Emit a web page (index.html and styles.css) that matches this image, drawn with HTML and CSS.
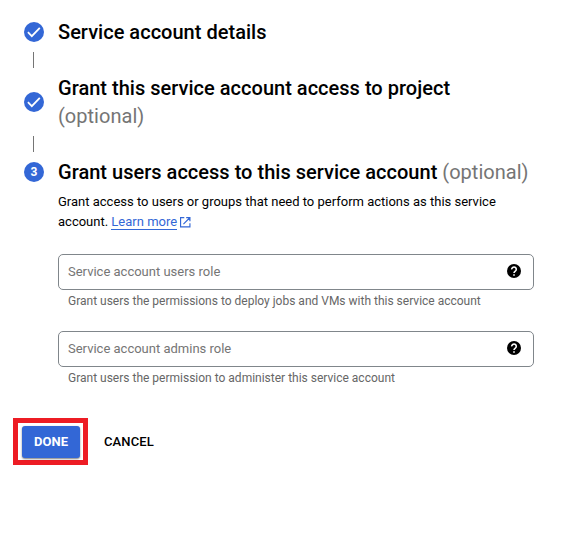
FILE: index.html
```html
<!DOCTYPE html>
<html lang="en">
<head>
<meta charset="utf-8">
<title>Create service account</title>
<link rel="stylesheet" href="styles.css">
</head>
<body>
<main class="stepper">
  <section class="step">
    <svg class="badge" viewBox="0 0 20 20"><circle cx="10" cy="10" r="10"/><path d="M3.9 10.2 7.8 14.1l8-8.3"/></svg>
    <h2>Service account details</h2>
  </section>
  <div class="connector"></div>
  <section class="step">
    <svg class="badge" viewBox="0 0 20 20"><circle cx="10" cy="10" r="10"/><path d="M3.9 10.2 7.8 14.1l8-8.3"/></svg>
    <h2>Grant this service account access to project <span class="optional">(optional)</span></h2>
  </section>
  <div class="connector"></div>
  <section class="step">
    <span class="badge number">3</span>
    <h2>Grant users access to this service account <span class="optional">(optional)</span></h2>
  </section>
  <div class="content">
    <p class="intro">Grant access to users or groups that need to perform actions as this service account. <a class="link">Learn more</a><svg class="external" viewBox="0 0 11 11"><path d="M4.5.6H.6v9.8h9.8V6.5M6.5.6h3.9v3.9M10.2.8 3.6 7.4"/></svg></p>
    <div class="field"><span>Service account users role</span><svg class="help" viewBox="0 0 14 14"><circle cx="7" cy="7" r="7"/><path d="M4.7 5.4a2.3 2.2 0 1 1 3.6 1.7C7.4 7.7 7 8 7 9.1M7 10.2v1.5"/></svg></div>
    <p class="hint">Grant users the permissions to deploy jobs and VMs with this service account</p>
    <div class="field"><span>Service account admins role</span><svg class="help" viewBox="0 0 14 14"><circle cx="7" cy="7" r="7"/><path d="M4.7 5.4a2.3 2.2 0 1 1 3.6 1.7C7.4 7.7 7 8 7 9.1M7 10.2v1.5"/></svg></div>
    <p class="hint">Grant users the permission to administer this service account</p>
  </div>
  <div class="actions">
    <div class="highlight"><button class="done">DONE</button></div>
    <button class="cancel">CANCEL</button>
  </div>
</main>
</body>
</html>
```
FILE: styles.css
```css
* { box-sizing: border-box; }
body { margin: 0; background: #fff; color: #000; font-family: Roboto, sans-serif; }
h2, p { margin: 0; }
button { border: 0; padding: 0; font: 500 13px/20px Roboto, sans-serif; letter-spacing: .1px; }
.stepper { padding: 18px 0 0 24px; }
.step { display: flex; align-items: center; gap: 14px; }
.badge { flex: none; width: 20px; height: 20px; fill: #3367d6; }
.badge path { fill: none; stroke: #fff; stroke-width: 1.8; }
.number { border-radius: 50%; background: #3367d6; color: #fff; font-size: 12px; font-weight: 700; line-height: 20px; text-align: center; }
.step h2 { width: 476px; font-size: 20px; line-height: 28px; font-weight: 500; letter-spacing: .02px; }
.step h2 .optional { color: #757575; font-weight: 400; }
.connector { width: 1px; height: 16px; margin: 6px 0 6px 9px; background: #757575; }
.content { width: 476px; margin-left: 34px; }
.intro { padding-top: 6px; font-size: 13px; line-height: 20px; }
.link { color: #3367d6; border-bottom: 1px solid #3367d6; }
.external { width: 10.5px; height: 10.5px; margin-left: 3px; vertical-align: -1.5px; fill: none; stroke: #3367d6; stroke-width: 1.2; }
.field { display: flex; align-items: center; justify-content: space-between; height: 36px; margin-top: 22px; padding: 0 12px 2px 9px; border: 1px solid #80868b; border-radius: 5px; color: #757575; font-size: 13px; }
.help { width: 14px; height: 14px; fill: #000; }
.help path { fill: none; stroke: #fff; stroke-width: 1.6; }
.hint { padding: 3px 10px 0; color: #666; font-size: 12px; line-height: 16px; }
.actions { display: flex; align-items: center; gap: 16px; margin: 32px 0 0 -11px; }
.highlight { width: 75px; height: 47px; padding: 3px 4px; border: 5px solid #ed1c24; }
.done { display: block; width: 58px; height: 32px; border-radius: 3px; background: #3367d6; color: #fff; font-weight: 700; letter-spacing: 0; box-shadow: 0 1px 2px rgba(0, 0, 0, .5); }
.cancel { background: none; color: #000; }
```
